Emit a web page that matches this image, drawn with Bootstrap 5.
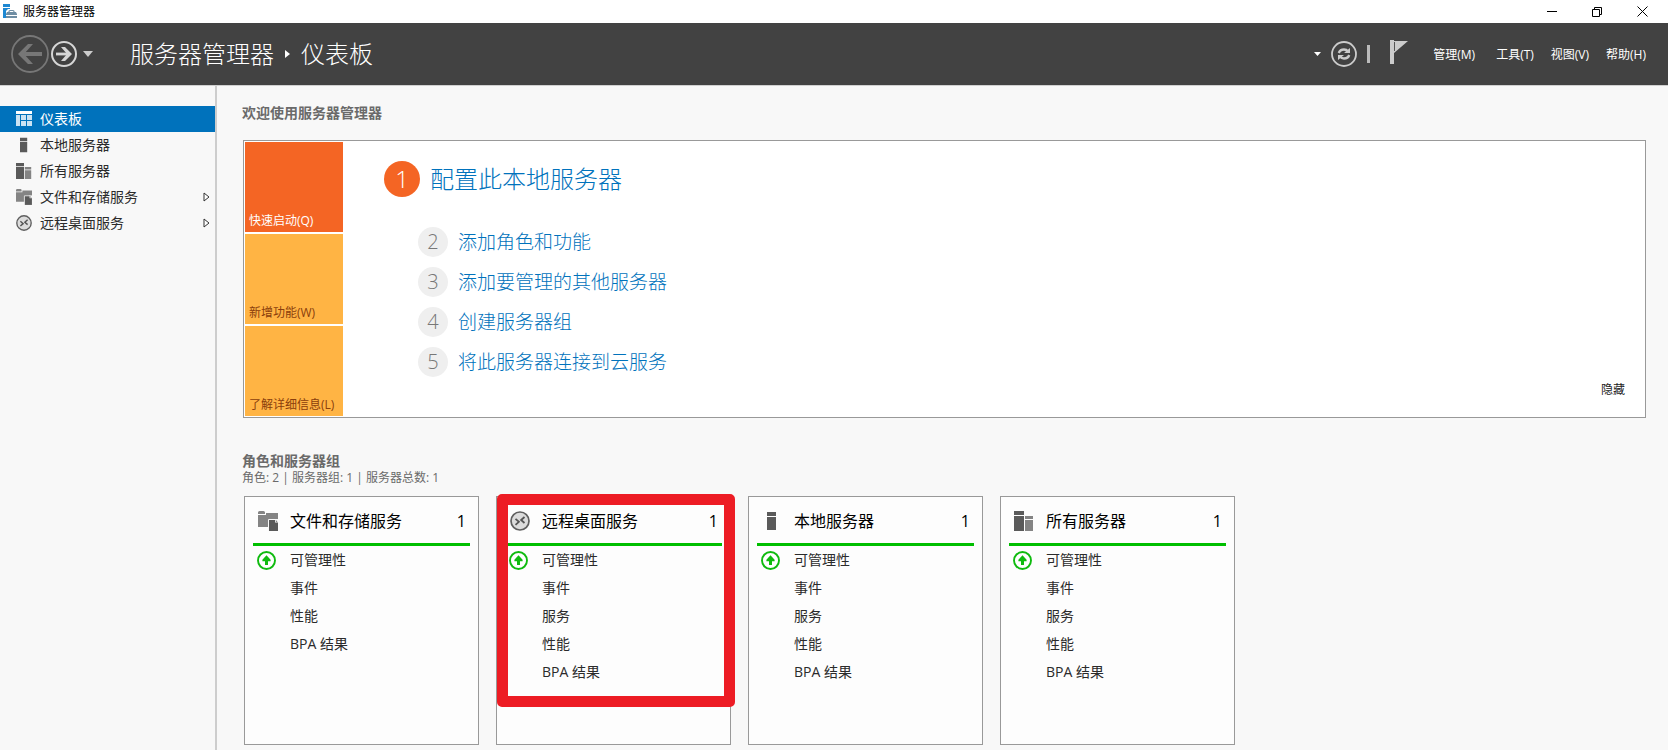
<!DOCTYPE html>
<html lang="zh-CN">
<head>
<meta charset="utf-8">
<meta name="viewport" content="width=device-width, initial-scale=1">
<title>服务器管理器</title>
<link href="https://cdn.jsdelivr.net/npm/bootstrap@5.3.0/dist/css/bootstrap.min.css" rel="stylesheet">
<style>
  body { font-family: "Open Sans", "Noto Sans CJK SC", sans-serif; font-size: 14px; line-height: 20px; background: #f8f8f8; color: #2b2b2b; }
  a { text-decoration: none; color: inherit; }
  svg { display: block; flex: none; }
  .icon-btn { border: 0; padding: 0; background: none; color: inherit; }
  .text-sm12 { font-size: 12px; line-height: 16px; }

  .titlebar { height: 23px; background: #fff; color: #000; padding-left: 3px; padding-right: 20px; gap: 5px; }
  .window-buttons { gap: 35px; }

  .topbar { background: #424242; color: #fff; height: 63px; border-bottom: 1px solid #d0d0d0; padding: 0 22px 0 11px; }
  .history { gap: 2px; }
  .crumbs { font-size: 24px; line-height: 32px; font-weight: 300; margin-left: 37px; gap: 11px; }
  .menu { gap: 17px; margin-left: 21px; padding-top: 2px; }

  .sidebar { width: 217px; border-right: 2px solid #cdcdcd; padding-top: 20px; }
  .side-item { height: 26px; padding: 0 5px 0 16px; gap: 8px; color: #2b2b2b; }
  .side-item.active { background: #0072bc; color: #fff; }

  .main { padding: 17px 22px 5px 25px; }
  .section-title { font-size: 14px; line-height: 20px; font-weight: 700; color: #6a6a6a; margin: 0; }
  .summary { font-size: 12px; line-height: 14px; color: #6a6a6a; }

  .welcome { background: #fff; border: 1px solid #999; padding: 1px; margin: 17px 0 33px 1px; }
  .tiles { width: 98px; gap: 2px; }
  .tile { height: 90px; border: 0; background: #ffb444; color: #8a3e0c; padding: 0 0 3px 4px; text-align: left; }
  .tile.active { background: #f46524; color: #fff; }
  .steps { padding: 19px 0 0 41px; color: #0072bc; font-weight: 300; }
  .step-first { font-size: 24px; line-height: 36px; gap: 10px; margin-bottom: 30px; }
  .step-rest { font-size: 19px; line-height: 30px; gap: 10px; margin: 0 0 10px 34px; }
  .num { width: 30px; height: 30px; background: #efefef; color: #777; font-size: 20px; line-height: 30px; text-align: center; }
  .num-first { width: 36px; height: 36px; background: #f46524; color: #fff; font-size: 24px; line-height: 36px; }
  .hide-link { color: #222; padding: 0 19px 18px 0; }

  .tile-row { gap: 17px; margin: 11px 0 0 2px; }
  .role { width: 235px; height: 249px; border: 1px solid #999; background: #fdfdfd; padding: 0 8px; }
  .role-head { height: 49px; border-bottom: 3px solid #00bf00; font-size: 16px; line-height: 24px; color: #000; padding: 2px 4px 0 5px; gap: 12px; }
  .role-list { margin: 0; padding-left: 4px; }
  .role-list li { height: 28px; gap: 14px; }
  .state { width: 19px; }
  .highlight { position: absolute; top: -3px; right: -5px; bottom: 37px; left: 0; border: 11px solid #ed1c24; border-radius: 5px; pointer-events: none; }
</style>
</head>
<body class="min-vh-100 d-flex flex-column">

<svg width="0" height="0" class="position-absolute" aria-hidden="true">
  <symbol id="i-dash" viewBox="0 0 16 16">
    <path fill="#fff" d="M0 0h16v3H0z"/>
    <path fill="#cbe3f3" d="M0 4h4v11H0zM5 4h5v5H5zM11 4h5v5h-5zM5 10h5v5H5zM11 10h5v5h-5z"/>
  </symbol>
  <symbol id="i-server" viewBox="0 0 20 20">
    <path fill="#5a5a5a" d="M5 1h9v4H5zM5 6h9v13H5z"/>
  </symbol>
  <symbol id="i-servers" viewBox="0 0 20 20">
    <path fill="#5a5a5a" d="M0 0h10v4H0zM0 5h10v15H0z"/>
    <path fill="#848484" d="M11 5h8v3h-8zM11 9h8v11h-8z"/>
  </symbol>
  <symbol id="i-files" viewBox="0 0 20 20">
    <path fill="#848484" d="M0 3V1.500Q0 0 1.500 0H5.500Q7 0 7 1.500V3zM8 2h12v14H0V4h8z"/>
    <path fill="#5a5a5a" stroke="#f8f8f8" stroke-width="1" d="M10.500 8.500h7l3 3v9h-10z"/>
    <path fill="#f8f8f8" d="M17 8h3v3.500h-3z"/>
    <path fill="#5a5a5a" d="M17.800 9l1.700 1.700h-1.700z"/>
  </symbol>
  <symbol id="i-rds" viewBox="0 0 20 20">
    <circle cx="10" cy="10" r="9" fill="#dcdcdc" stroke="#5f5f5f" stroke-width="1.700"/>
    <path fill="none" stroke="#555" stroke-width="1.800" d="M5.500 7.800l3.400 3-3.400 3M14.500 6l-3.400 3 3.400 3"/>
  </symbol>
  <symbol id="i-up" viewBox="0 0 19 19">
    <circle cx="9.500" cy="9.500" r="8.500" fill="#fff" stroke="#0fbb0f" stroke-width="1.900"/>
    <path fill="#0fbb0f" d="M9.500 4.300L13.600 8.800V10.300H11V14H8V10.300H5.400V8.800z"/>
  </symbol>
  <symbol id="i-expand" viewBox="0 0 7 10">
    <path fill="#fff" stroke="#333" d="M1 1l5 4-5 4z"/>
  </symbol>
</svg>

<header>
  <div class="titlebar d-flex align-items-center text-sm12">
    <svg width="15" height="15" viewBox="0 0 15 15"><path fill="#1e88d2" d="M0 0h7v3H0zM0 4h7v1H5L3 7v7H0z"/><path fill="none" stroke="#6f8da3" stroke-width="1.200" d="M6 8.500V7.500Q6 6.500 7 6.500H10Q11 6.500 11 7.500V8.500"/><path fill="#6f8da3" d="M4 8h9l1 2v1H3v-1zM3 12h11v2H3z"/></svg>
    <span>服务器管理器</span>
    <div class="window-buttons d-flex align-items-center ms-auto">
      <button class="icon-btn" aria-label="最小化"><svg width="10" height="10"><path stroke="#000" d="M0 4.500h10"/></svg></button>
      <button class="icon-btn" aria-label="还原"><svg width="10" height="10" fill="none" stroke="#000"><path d="M.5 2.500h7v7h-7zM2.500 2V.5h7v7H8"/></svg></button>
      <button class="icon-btn" aria-label="关闭"><svg width="11" height="11" stroke="#000"><path d="M.5.500l10 10M10.500.500l-10 10"/></svg></button>
    </div>
  </div>

  <div class="topbar d-flex align-items-center">
    <div class="history d-flex align-items-center">
      <button class="icon-btn" aria-label="后退"><svg width="38" height="38" fill="none" stroke="#777"><circle cx="19" cy="19" r="18" stroke-width="1.800"/><path d="M31 19H9" stroke-width="4"/><path fill="#777" stroke="none" d="M17 9h5l-9 10 9 10h-5L7 19z"/></svg></button>
      <button class="icon-btn" aria-label="前进"><svg width="26" height="26" fill="none" stroke="#d6d6d6"><circle cx="13" cy="13" r="12" stroke-width="2"/><path d="M5 13h14" stroke-width="2.800"/><path fill="#d6d6d6" stroke="none" d="M10 6h4l7 7-7 7h-4l6-7z"/></svg></button>
      <button class="icon-btn ms-1" aria-label="历史记录"><svg width="10" height="6"><path fill="#ccc" d="M0 0h10L5 6z"/></svg></button>
    </div>
    <nav class="crumbs d-flex align-items-center" aria-label="路径">
      <a href="#">服务器管理器</a>
      <svg width="5" height="8"><path fill="#fff" d="M0 0l5 4-5 4z"/></svg>
      <span>仪表板</span>
    </nav>
    <div class="d-flex align-items-center ms-auto text-sm12">
      <button class="icon-btn" aria-label="通知列表"><svg width="7" height="4"><path fill="#fff" d="M0 0h7L3.500 4z"/></svg></button>
      <button class="icon-btn ms-2" aria-label="刷新"><svg width="28" height="26" fill="none" stroke="#ccc"><circle cx="15" cy="13" r="12" stroke-width="1.800"/><path stroke-width="2.400" d="M9.800 12Q11 8.500 15 8.500Q17.500 8.500 19 10.500M20.200 14Q19 17.500 15 17.500Q12.500 17.500 11 15.500"/><path fill="#ccc" stroke="none" d="M21 7v5h-6zM9 19v-5h6z"/></svg></button>
      <svg class="ms-2" width="5" height="18"><path fill="#bbb" d="M2 0h3v18H2z"/></svg>
      <button class="icon-btn ms-3 pb-1" aria-label="通知"><svg width="22" height="24" class="ms-1"><path fill="#ccc" d="M0 0h4v24H0zM4 1h14L4 13z"/><path stroke="#555" d="M4.500 2v9"/></svg></button>
      <nav class="menu d-flex" aria-label="菜单">
        <a href="#" class="me-1">管理(M)</a>
        <a href="#">工具(T)</a>
        <a href="#">视图(V)</a>
        <a href="#">帮助(H)</a>
      </nav>
    </div>
  </div>
</header>

<div class="d-flex flex-grow-1">
  <nav class="sidebar nav flex-column flex-nowrap flex-shrink-0" aria-label="服务器">
    <a href="#" class="side-item active d-flex align-items-center"><svg width="16" height="16"><use href="#i-dash"/></svg>仪表板</a>
    <a href="#" class="side-item d-flex align-items-center"><svg width="16" height="16"><use href="#i-server"/></svg>本地服务器</a>
    <a href="#" class="side-item d-flex align-items-center"><svg width="16" height="16"><use href="#i-servers"/></svg>所有服务器</a>
    <a href="#" class="side-item d-flex align-items-center"><svg width="16" height="16"><use href="#i-files"/></svg>文件和存储服务<svg class="ms-auto" width="7" height="10"><use href="#i-expand"/></svg></a>
    <a href="#" class="side-item d-flex align-items-center"><svg width="16" height="16"><use href="#i-rds"/></svg>远程桌面服务<svg class="ms-auto" width="7" height="10"><use href="#i-expand"/></svg></a>
  </nav>

  <main class="main flex-grow-1">
    <h1 class="section-title">欢迎使用服务器管理器</h1>

    <section class="welcome d-flex">
      <div class="tiles d-flex flex-column flex-shrink-0 text-sm12">
        <button class="tile active d-flex align-items-end">快速启动(Q)</button>
        <button class="tile d-flex align-items-end">新增功能(W)</button>
        <button class="tile d-flex align-items-end">了解详细信息(L)</button>
      </div>
      <div class="steps flex-grow-1">
        <a href="#" class="step-first d-flex"><span class="num num-first rounded-circle">1</span>配置此本地服务器</a>
        <a href="#" class="step-rest d-flex"><span class="num rounded-circle">2</span>添加角色和功能</a>
        <a href="#" class="step-rest d-flex"><span class="num rounded-circle">3</span>添加要管理的其他服务器</a>
        <a href="#" class="step-rest d-flex"><span class="num rounded-circle">4</span>创建服务器组</a>
        <a href="#" class="step-rest d-flex"><span class="num rounded-circle">5</span>将此服务器连接到云服务</a>
      </div>
      <a href="#" class="hide-link align-self-end text-sm12">隐藏</a>
    </section>

    <h2 class="section-title">角色和服务器组</h2>
    <div class="summary">角色: 2 | 服务器组: 1 | 服务器总数: 1</div>

    <div class="tile-row d-flex flex-wrap">
      <article class="role">
        <div class="role-head d-flex align-items-center"><svg width="20" height="20"><use href="#i-files"/></svg><a href="#">文件和存储服务</a><span class="ms-auto">1</span></div>
        <ul class="role-list list-unstyled">
          <li class="d-flex align-items-center"><svg class="state" height="19"><use href="#i-up"/></svg><a href="#">可管理性</a></li>
          <li class="d-flex align-items-center"><span class="state"></span><a href="#">事件</a></li>
          <li class="d-flex align-items-center"><span class="state"></span><a href="#">性能</a></li>
          <li class="d-flex align-items-center"><span class="state"></span><a href="#">BPA 结果</a></li>
        </ul>
      </article>
      <article class="role position-relative">
        <div class="role-head d-flex align-items-center"><svg width="20" height="20"><use href="#i-rds"/></svg><a href="#">远程桌面服务</a><span class="ms-auto">1</span></div>
        <ul class="role-list list-unstyled">
          <li class="d-flex align-items-center"><svg class="state" height="19"><use href="#i-up"/></svg><a href="#">可管理性</a></li>
          <li class="d-flex align-items-center"><span class="state"></span><a href="#">事件</a></li>
          <li class="d-flex align-items-center"><span class="state"></span><a href="#">服务</a></li>
          <li class="d-flex align-items-center"><span class="state"></span><a href="#">性能</a></li>
          <li class="d-flex align-items-center"><span class="state"></span><a href="#">BPA 结果</a></li>
        </ul>
        <div class="highlight"></div>
      </article>
      <article class="role">
        <div class="role-head d-flex align-items-center"><svg width="20" height="20"><use href="#i-server"/></svg><a href="#">本地服务器</a><span class="ms-auto">1</span></div>
        <ul class="role-list list-unstyled">
          <li class="d-flex align-items-center"><svg class="state" height="19"><use href="#i-up"/></svg><a href="#">可管理性</a></li>
          <li class="d-flex align-items-center"><span class="state"></span><a href="#">事件</a></li>
          <li class="d-flex align-items-center"><span class="state"></span><a href="#">服务</a></li>
          <li class="d-flex align-items-center"><span class="state"></span><a href="#">性能</a></li>
          <li class="d-flex align-items-center"><span class="state"></span><a href="#">BPA 结果</a></li>
        </ul>
      </article>
      <article class="role">
        <div class="role-head d-flex align-items-center"><svg width="20" height="20"><use href="#i-servers"/></svg><a href="#">所有服务器</a><span class="ms-auto">1</span></div>
        <ul class="role-list list-unstyled">
          <li class="d-flex align-items-center"><svg class="state" height="19"><use href="#i-up"/></svg><a href="#">可管理性</a></li>
          <li class="d-flex align-items-center"><span class="state"></span><a href="#">事件</a></li>
          <li class="d-flex align-items-center"><span class="state"></span><a href="#">服务</a></li>
          <li class="d-flex align-items-center"><span class="state"></span><a href="#">性能</a></li>
          <li class="d-flex align-items-center"><span class="state"></span><a href="#">BPA 结果</a></li>
        </ul>
      </article>
    </div>
  </main>
</div>

<script src="https://cdn.jsdelivr.net/npm/bootstrap@5.3.0/dist/js/bootstrap.bundle.min.js"></script>
</body>
</html>
